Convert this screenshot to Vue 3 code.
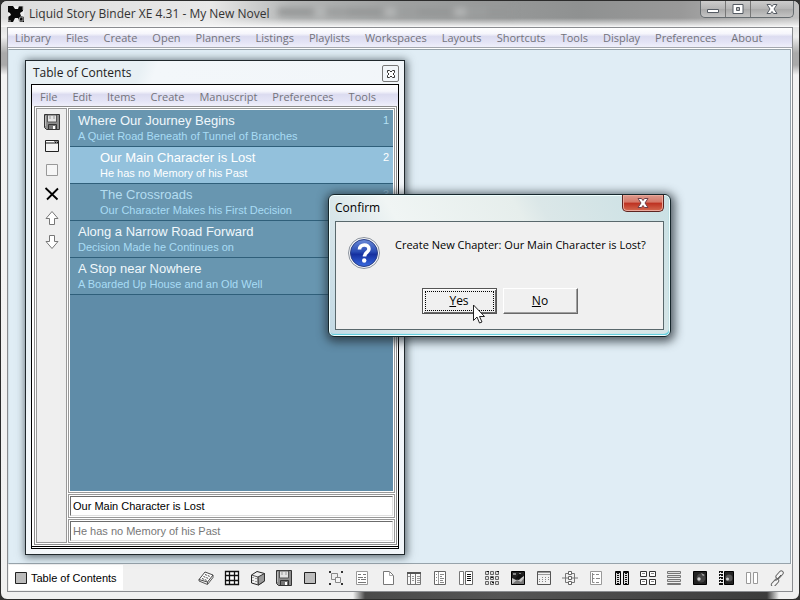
<script setup>
import { ref } from 'vue'

const mainMenu = ['Library', 'Files', 'Create', 'Open', 'Planners', 'Listings', 'Playlists', 'Workspaces', 'Layouts', 'Shortcuts', 'Tools', 'Display', 'Preferences', 'About']
const contentsMenu = ['File', 'Edit', 'Items', 'Create', 'Manuscript', 'Preferences', 'Tools']

const chapters = [
  { id: 1, title: 'Where Our Journey Begins', note: 'A Quiet Road Beneath of Tunnel of Branches', number: 1 },
  { id: 2, title: 'Our Main Character is Lost', note: 'He has no Memory of his Past', number: 2, child: true, selected: true },
  { id: 3, title: 'The Crossroads', note: 'Our Character Makes his First Decision', number: 3, child: true, dim: true },
  { id: 4, title: 'Along a Narrow Road Forward', note: 'Decision Made he Continues on' },
  { id: 5, title: 'A Stop near Nowhere', note: 'A Boarded Up House and an Old Well' }
]

const chapterTitle = ref('Our Main Character is Lost')
const chapterNote = ref('He has no Memory of his Past')

const floppy = '<path d="M.5.5h15v15H2.500L.5 13.500z" fill="#8c8c8c" stroke="#333"/><path d="M3.500 1h9v7h-9z" fill="#e4e4e4" stroke="#555"/><path d="M6 1v4M10 1v4" stroke="#999"/><path d="M4.500 10.500h8v5h-8z" fill="#777" stroke="#333"/><path d="M9 12h2v3H9z" fill="#fff"/><path d="M1.500 2v10" stroke="#bbb"/>'

const sideTools = [
  { label: 'Save', art: floppy },
  { label: 'Open window', art: '<path d="M1.500 2.500h13v11h-13z" fill="#f4f4f4" stroke="#222"/><path d="M2 3h12v3H2z" fill="#888"/><path d="M2 3.500h8" stroke="#fff"/><path d="M11 4.500h1M13 4.500h1" stroke="#111"/>' },
  { label: 'Mark', art: '<path d="M2.500 2.500h11v11h-11z" fill="#f6f6f6" stroke="#999"/>' },
  { label: 'Delete', art: '<path d="M1.500 2L13.500 13.500M14 2.500L9.500 7L3 13.500" stroke="#000" stroke-width="1.800" fill="none"/>' },
  { label: 'Move up', art: '<path d="M8 1.500L14 8.500H10.500V14.500H5.500V8.500H2z" fill="#fff" stroke="#777"/>' },
  { label: 'Move down', art: '<path d="M8 14.500L14 7.500H10.500V1.500H5.500V7.500H2z" fill="#fff" stroke="#777"/>' }
]

const tools = [
  { label: 'Note', art: '<path d="M1 9.500L7 2L15 5L9.500 12z" fill="#fff" stroke="#333" stroke-width=".9"/><path d="M1 9.500v1.500l8.500 3.500 5.500-7V5M9.500 12v2" fill="none" stroke="#444" stroke-width=".9"/><path d="M7 4.500l5 2M5.500 6.500l5 2M4 8.500l5 2" stroke="#444" stroke-dasharray="2 1"/>' },
  { label: 'Grid', art: '<path d="M1.500 1.500h13v13h-13zM5.500 1.500v13M10.500 1.500v13M1.500 5.500h13M1.500 10.500h13" fill="#fff" stroke="#111" stroke-width="1.300"/>' },
  { label: 'Box', art: '<path d="M1.500 5L7 1.500L14.500 3.500V11L8.500 15L1.500 13z" fill="#eee" stroke="#222"/><path d="M8 7l6.500-3.500V11L8.500 15z" fill="#999" stroke="#333"/><path d="M1.500 5L8 7V15" fill="none" stroke="#555"/><path d="M3 7v1M3 10v1M6 8v1M6 11v1" stroke="#555"/>' },
  { label: 'Save', art: floppy },
  { label: 'Panel', art: '<path d="M2.500 2.500h11v11h-11z" fill="#bdbdbd" stroke="#222"/>' },
  { label: 'Group', art: '<path d="M3.500 3.500h6v6h-6z" fill="#eee" stroke="#888"/><path d="M7.500 7.500h5v5h-5z" fill="#f6f6f6" stroke="#888"/><path d="M1 1h2v2H1zM13 1h2v2h-2zM1 13h2v2H1zM13 13h2v2h-2z" fill="#333"/>' },
  { label: 'Article', art: '<path d="M2.500 1.500h11v13h-11z" fill="#fff" stroke="#999"/><path d="M4 4.500h3M9 4.500h3M4 7.500h5M10 7.500h2M4 9.500h2M7 9.500h5M4 12.500h8" stroke="#777"/>' },
  { label: 'Page', art: '<path d="M3.500 1.500h6l4 4v9h-10z" fill="#fff" stroke="#777"/><path d="M9.500 1.500v4h4" fill="none" stroke="#aaa"/>' },
  { label: 'Outline', art: '<path d="M1.500 2.500h13v12h-13z" fill="#fafafa" stroke="#777"/><path d="M1 3h14" stroke="#555" stroke-width="2"/><path d="M4.500 4v10M9.500 4v10" stroke="#777"/><path d="M2 6.500h2M6 6.500h2M11 6.500h3M6 8.500h2M11 8.500h3M6 10.500h2M11 10.500h3M11 12.500h3" stroke="#999"/>' },
  { label: 'Catalog', art: '<path d="M2.500 1.500h11v13h-11z" fill="#fff" stroke="#666"/><path d="M6.500 2v12" stroke="#999"/><path d="M4 4.500h1M4 7.500h1M4 10.500h1M8 4.500h4M8 6.500h2M8 8.500h4M8 10.500h3M8 12.500h4" stroke="#888"/>' },
  { label: 'Compare', art: '<path d="M1.500 1.500h4v13h-4z" fill="#fff" stroke="#777"/><path d="M7.500 1.500h7v13h-7z" fill="#fff" stroke="#666"/><path d="M9 4.500h4M9 6.500h4M9 8.500h4M9 10.500h4" stroke="#111"/>' },
  { label: 'Storyboard', art: '<path d="M1.500 1.500h3v3h-3zM6.500 1.500h3v3h-3zM11.500 1.500h3v3h-3zM1.500 6.500h3v3h-3zM6.500 6.500h3v3h-3zM11.500 6.500h3v3h-3zM1.500 11.500h3v3h-3zM6.500 11.500h3v3h-3zM11.500 11.500h3v3h-3z" fill="#ddd" stroke="#666"/><path d="M3 1.500h2M7 7.500h2M13 1.500h2M8 12.500h2" stroke="#111"/>' },
  { label: 'Picture', art: '<path d="M1.500 1.500h13v13h-13z" fill="#222" stroke="#000"/><path d="M2 8l4 2 3-1 5-3v8H2z" fill="#c4c4c4"/><path d="M2 14l5-4 4 2 3-4v6z" fill="#777"/><path d="M5 9l4-5 4 2-4 4z" fill="#111"/><path d="M3 3h3v2H3zM9 3h2v1H9z" fill="#888"/>' },
  { label: 'Calendar', art: '<path d="M1.500 1.500h13v13h-13z" fill="#f2f2f2" stroke="#555"/><path d="M2 4.500h12M2 2.500h12" stroke="#999"/><path d="M6 7.500h1M9 7.500h1M12 7.500h1M3 9.500h1M6 9.500h1M9 9.500h1M12 9.500h1M3 11.500h1M6 11.500h1M9 11.500h1" stroke="#888"/>' },
  { label: 'Diagram', art: '<path d="M3.500 3.500h9v9h-9zM0 8h16" fill="none" stroke="#777"/><path d="M6.500 1.500h3v3h-3zM6.500 6.500h3v3h-3zM6.500 11.500h3v3h-3z" fill="#fff" stroke="#666"/>' },
  { label: 'Tree', art: '<path d="M2.500 1.500h11v13h-11z" fill="#fff" stroke="#999"/><path d="M4.500 3v9.500h2M4.500 4.500h2M4.500 8.500h2M8 4.500h3M8 8.500h4M8 12.500h3" stroke="#888" fill="none"/>' },
  { label: 'Columns', art: '<path d="M1.500 1.500h5v13h-5zM9.500 1.500h5v13h-5z" fill="#ddd" stroke="#000"/><path d="M4 3v11M12 3v11" stroke="#111" stroke-width="2" stroke-dasharray="1 1"/><path d="M1 2.500h6M9 2.500h6" stroke="#111"/>' },
  { label: 'Cards', art: '<path d="M.5 1.500h6v5h-6zM9.500 1.500h6v5h-6zM.5 9.500h6v5h-6zM9.500 9.500h6v5h-6z" fill="#fff" stroke="#333"/><path d="M2 3.500h3M11 3.500h3M2 11.500h3M11 11.500h3" stroke="#888"/>' },
  { label: 'Rows', art: '<path d="M1.500 1.500h13v2h-13zM1.500 5.500h13v2h-13zM1.500 9.500h13v2h-13zM1.500 13.500h13v1h-13z" fill="#ddd" stroke="#777"/>' },
  { label: 'Gallery', art: '<path d="M1.500 1.500h13v13h-13z" fill="#222" stroke="#000"/><circle cx="9" cy="8" r="4.500" fill="#444"/><circle cx="7" cy="9" r="1.700" fill="#ccc"/><path d="M9 3l4 2-2 1z" fill="#aaa"/>' },
  { label: 'Slides', art: '<path d="M6.500 1.500h9v13h-9z" fill="#222" stroke="#000"/><path d="M3 1v14" stroke="#111" stroke-width="4" stroke-dasharray="2 1"/><path d="M2.500 2v12" stroke="#ddd" stroke-dasharray="1 2"/><circle cx="11" cy="8" r="3.500" fill="#555"/><circle cx="9.500" cy="9" r="1.500" fill="#ccc"/>' },
  { label: 'Split', art: '<path d="M2.500 2.500h4v11h-4zM9.500 2.500h4v11h-4z" fill="#fff" stroke="#999"/>' },
  { label: 'Link', art: '<g fill="#f4f4f4" stroke="#666"><rect x="-1" y="6" width="9" height="4" rx="2" transform="rotate(-48 8 8) translate(-1 1)"/><rect x="8" y="6" width="9" height="4" rx="2" transform="rotate(-48 8 8) translate(-1 -1)"/></g><path d="M5.500 11l5.500-6" stroke="#555"/>' }
]
</script>

<template>
  <div class="shell">
    <header class="titlebar">
      <svg class="logo" viewBox="0 0 16 16" aria-hidden="true">
        <path d="M0 0h16v16H0z" fill="#eee" />
        <path d="M0 0h5l2 3h3l1-3h4v5l-3 2 1 3 3 1v5h-4l-2-4H7l-2 4H0v-5l3-2-1-2-2-1z" fill="#080808" />
        <path d="M11 0h4v4M12 11h3v4h-4zM0 10v5h3" fill="none" stroke="#aaa" />
      </svg>
      <h1>Liquid Story Binder XE 4.31 - My New Novel</h1>
      <div class="blurred" aria-hidden="true"></div>
      <div class="window-buttons">
        <button aria-label="Minimize"><svg viewBox="0 0 16 12"><path d="M2.500 6.500h11v3h-11z" fill="#fff" stroke="#555b63" /></svg></button>
        <button aria-label="Maximize"><svg viewBox="0 0 16 12"><path d="M3 1.500h10v9H3z" fill="#fff" stroke="#555b63" /><path d="M6.500 4.500h3v3h-3z" fill="#bbb" stroke="#555b63" /></svg></button>
        <button class="wide" aria-label="Close"><svg viewBox="0 0 16 12"><path d="M3 1.500h3.500L8 3.500l1.500-2H13L10 6l3 4.500H9.500L8 8.500l-1.500 2H3L6 6z" fill="#fff" stroke="#555b63" /></svg></button>
      </div>
    </header>

    <div class="client">
      <nav class="menu main-menu" aria-label="Main">
        <button v-for="item in mainMenu" :key="item">{{ item }}</button>
      </nav>

      <main class="desktop">
        <section class="contents-window">
          <div class="contents-title">
            <h2>Table of Contents</h2>
            <button class="small-close" aria-label="Close contents">
              <svg viewBox="0 0 8 8"><path d="M.5.5h2L4 2 5.500.5h2v2L6 4l1.500 1.500v2h-2L4 6 2.500 7.500h-2v-2L2 4 .5 2.500z" fill="#fff" stroke="#333" /></svg>
            </button>
          </div>
          <div class="contents-body">
            <nav class="menu contents-menu" aria-label="Contents">
              <button v-for="item in contentsMenu" :key="item">{{ item }}</button>
            </nav>
            <div class="panes">
              <div class="side-tools">
                <button v-for="tool in sideTools" :key="tool.label" :aria-label="tool.label">
                  <svg viewBox="0 0 16 16" v-html="tool.art"></svg>
                </button>
              </div>
              <div class="pane-column">
                <div class="cell list-cell">
                  <ul class="chapters">
                    <li v-for="chapter in chapters" :key="chapter.id" :class="{ child: chapter.child, selected: chapter.selected, dim: chapter.dim }">
                      <div class="chapter-text">
                        <div class="chapter-title">{{ chapter.title }}</div>
                        <div class="chapter-note">{{ chapter.note }}</div>
                      </div>
                      <span v-if="chapter.number" class="chapter-number">{{ chapter.number }}</span>
                    </li>
                  </ul>
                </div>
                <div class="cell"><input v-model="chapterTitle" type="text" aria-label="Chapter title" /></div>
                <div class="cell"><input v-model="chapterNote" class="note-input" type="text" aria-label="Chapter note" /></div>
              </div>
            </div>
          </div>
        </section>

        <section class="dialog" role="dialog" aria-labelledby="confirm-title">
          <div class="dialog-title">
            <h2 id="confirm-title">Confirm</h2>
            <button class="dialog-close" aria-label="Close dialog">
              <svg viewBox="0 0 16 12"><path d="M3 1.500h3.500L8 3.500l1.500-2H13L10 6l3 4.500H9.500L8 8.500l-1.500 2H3L6 6z" fill="#fff" stroke="#704048" /></svg>
            </button>
          </div>
          <div class="dialog-body">
            <div class="question">
              <svg viewBox="0 0 32 32" aria-hidden="true">
                <defs>
                  <linearGradient id="ball" x1="0" y1="0" x2="0" y2="1">
                    <stop offset="0" stop-color="#6a8ad8" />
                    <stop offset=".45" stop-color="#2a4cb4" />
                    <stop offset=".55" stop-color="#1530a0" />
                    <stop offset="1" stop-color="#3a6be0" />
                  </linearGradient>
                </defs>
                <circle cx="16" cy="16" r="15.500" fill="#f4f6fa" stroke="#8b929c" />
                <circle cx="16" cy="16" r="13.500" fill="url(#ball)" stroke="#2a3f86" />
                <path d="M11.500 12.500C11.500 6.500 21 6.500 21 12c0 3.500-4.500 3.500-4.500 7.500" fill="none" stroke="#fff" stroke-width="3.600" />
                <circle cx="16.200" cy="23.500" r="2.200" fill="#fff" />
              </svg>
              <p>Create New Chapter: Our Main Character is Lost?</p>
            </div>
            <div class="answers">
              <button class="default"><span><u>Y</u>es</span></button>
              <button><span><u>N</u>o</span></button>
            </div>
          </div>
          <svg class="pointer" viewBox="0 0 12 20" aria-hidden="true">
            <path d="M.5 1v15.500l3.500-3.500 2.500 6 2.500-1-2.500-5.500h5z" fill="#fff" stroke="#222" />
          </svg>
        </section>
      </main>

      <footer class="taskbar">
        <button class="task"><svg viewBox="0 0 12 12" aria-hidden="true"><path d="M.5.5h11v11H.5z" fill="#bbb" stroke="#222" /></svg>Table of Contents</button>
        <div class="tools">
          <button v-for="tool in tools" :key="tool.label" :aria-label="tool.label">
            <svg viewBox="0 0 16 16" v-html="tool.art"></svg>
          </button>
        </div>
      </footer>
    </div>
  </div>
</template>

<style>
body {
  background: #333;
}
</style>

<style scoped>
* {
  box-sizing: border-box;
}

button {
  padding: 0;
  border: 0;
  background: none;
  color: inherit;
  font: inherit;
}

svg {
  display: block;
}

h1,
h2,
p,
ul {
  margin: 0;
  padding: 0;
  font-size: inherit;
  font-weight: 400;
}

.shell {
  display: flex;
  flex-direction: column;
  min-height: 100vh;
  padding: 0 6px 7px 6px;
  border: 1px solid #2c2c2c;
  border-radius: 7px;
  background:
    linear-gradient(90deg, transparent 352px, #4a4a4a 364px, #555 500px, #3c3c3c calc(100% - 32px), transparent calc(100% - 20px)) bottom / 100% 7px no-repeat,
    linear-gradient(180deg, #c9c9c9 0, #eee 36px, #aaa 52px, #aaa 64px, #f3f3f3 74px, #f0f0f0 100%);
  font: 11px/16px "Open Sans", "Noto Sans", sans-serif;
  color: #222;
}

.titlebar {
  display: flex;
  align-items: center;
  position: relative;
  height: 26px;
  margin: 0 -6px;
  padding-left: 7px;
  border-radius: 6px 6px 0 0;
  background:
    linear-gradient(180deg, transparent 17px, #f4f4f4cc 24px, #fafafa 100%),
    linear-gradient(90deg, #ddd 0, #e8e8e8 210px, #b5b7b7 290px, #a0a2a2 400px, #8f9191 580px, #999 680px, #c2c2c2 100%);
}

.logo {
  width: 16px;
  height: 16px;
}

.titlebar h1 {
  margin-left: 5px;
  color: #333;
  font-size: 12px;
  line-height: 16px;
}

.blurred {
  flex: 0 1 236px;
  height: 8px;
  margin: -4px auto 0 8px;
  background: repeating-linear-gradient(90deg, #959797 0 34px, #b4b6b6 38px 46px, #9b9d9d 50px 70px);
  filter: blur(3px);
}

.window-buttons {
  display: flex;
  align-self: flex-start;
  margin-right: 5px;
  border: 1px solid #666c70;
  border-top: 0;
  border-radius: 0 0 5px 5px;
  background: linear-gradient(#ccc, #b4b4b4 50%, #a8a8a8 50%, #c4c4c4);
}

.window-buttons button {
  display: grid;
  place-items: center;
  width: 25px;
  height: 16px;
  border-right: 1px solid #777;
}

.window-buttons .wide {
  width: 42px;
  border-right: 0;
}

.window-buttons svg,
.dialog-close svg {
  width: 16px;
  height: 12px;
}

.client {
  display: flex;
  flex: 1;
  flex-direction: column;
  border: 1px solid #8a8c90;
  background: #fff;
}

.menu {
  display: flex;
  align-items: center;
  gap: 15px;
  color: #73737c;
  background: linear-gradient(#fff 0, #f6f6fc 30%, #dcdcf0 45%, #e4e4f6 75%, #f0f0fa 100%);
}

.main-menu {
  height: 20px;
  padding: 0 7px;
  border-bottom: 1px solid #a5a8b0;
}

.desktop {
  flex: 1;
  position: relative;
  margin: 1px 1px 0 0;
  border: 1px solid #97a3ab;
  border-left-color: #cfdde4;
  background: #e0edf5;
}

.contents-window {
  display: flex;
  flex-direction: column;
  position: absolute;
  left: 16px;
  top: 10px;
  width: 380px;
  height: 495px;
  padding: 0 5px 5px;
  border: 1px solid #20282c;
  background: linear-gradient(110deg, #e8f0f4 0, #e8f0f4 110px, #f3f7fa 125px, #f1f5f9 100%);
  box-shadow: 1px 1px 8px 1px #3a464ecc;
}

.contents-title {
  display: flex;
  align-items: center;
  justify-content: space-between;
  height: 23px;
  padding-left: 2px;
  font-size: 12px;
}

.small-close {
  display: grid;
  place-items: center;
  width: 17px;
  height: 17px;
  margin-top: 2px;
  border: 1px solid #777;
  border-radius: 2px;
}

.small-close svg {
  width: 8px;
  height: 8px;
}

.contents-body {
  display: flex;
  flex: 1;
  flex-direction: column;
  padding-bottom: 2px;
  border: 1px solid #000;
  background: linear-gradient(#000, #000) left bottom 1px / 100% 1px no-repeat #fff;
}

.contents-menu {
  height: 21px;
  padding: 2px 8px 0;
}

.panes {
  display: flex;
  flex: 1;
  gap: 1px;
  margin: 0 1px 1px 2px;
  padding: 1px;
  border: 1px solid #8d8d8d;
}

.side-tools {
  display: flex;
  flex-direction: column;
  align-items: center;
  gap: 8px;
  width: 31px;
  padding-top: 5px;
  border: 1px solid #999;
  background: #efefef;
}

.side-tools svg,
.tools svg {
  width: 16px;
  height: 16px;
}

.pane-column {
  display: flex;
  flex: 1;
  flex-direction: column;
  gap: 1px;
}

.cell {
  padding: 1px;
  border: 1px solid #999;
}

.list-cell {
  flex: 1;
  background: #fff;
}

.chapters {
  height: 100%;
  list-style: none;
  background: #5f8ca8;
  font-family: "Liberation Sans", Arial, sans-serif;
}

.chapters li {
  display: flex;
  justify-content: space-between;
  height: 37px;
  padding: 3px 4px 0 8px;
  border-bottom: 1px solid #2f5f7a;
  background: #6896b0;
  color: #f0f8fc;
}

.chapters .child {
  padding-left: 30px;
}

.chapters .selected {
  background: #93c1dc;
  color: #fff;
}

.chapters .dim {
  color: #b4ddf1;
}

.chapter-title {
  font-size: 13px;
  line-height: 16px;
}

.chapter-note {
  color: #a9dcf5;
  font-size: 11px;
  line-height: 14px;
}

.selected .chapter-note {
  color: #fff;
}

.chapter-number {
  color: #b4e0f4;
  font-size: 11px;
  line-height: 14px;
}

.selected .chapter-number {
  color: #fff;
}

.dim .chapter-number {
  color: #8fb9d0;
}

input {
  display: block;
  width: 100%;
  height: 20px;
  padding: 0 2px;
  border: 1px solid;
  border-color: #6c6c6c #e0e0e0 #e0e0e0 #6c6c6c;
  background: #fff;
  color: #000;
  font: 11px/16px "Liberation Sans", Arial, sans-serif;
}

.note-input {
  color: #777;
}

.dialog {
  position: absolute;
  left: 319px;
  top: 144px;
  width: 343px;
  padding: 0 6px 6px;
  border: 1px solid #16262b;
  border-radius: 6px;
  background: linear-gradient(60deg, #c2d9e4 0, #d9e6ea 18%, #f0f5f4 32%, #e6eeec 62%, #dbe7e8 68%, #c9e0e4 100%);
  box-shadow: inset 0 0 0 1px #f0ffff, inset -1px -2px 1px #59cddd, 1px 2px 10px 3px #222c32bb;
}

.dialog-title {
  display: flex;
  align-items: center;
  justify-content: space-between;
  height: 26px;
  color: #000;
  font-size: 12px;
}

.dialog-close {
  display: grid;
  place-items: center;
  align-self: flex-start;
  width: 42px;
  height: 17px;
  border: 1px solid #5d2420;
  border-top: 0;
  border-radius: 0 0 5px 5px;
  background: linear-gradient(#dd9a8e, #d57767 45%, #bd3020 50%, #d46a50);
  box-shadow: inset 0 0 0 1px #eba99c;
}

.dialog-body {
  border: 1px solid #59686c;
  background: #f0f0f0;
  color: #000;
}

.question {
  display: flex;
  gap: 15px;
  padding: 15px 12px 0;
}

.question svg {
  width: 32px;
  height: 32px;
}

.question p {
  flex: 1;
  font-size: 11px;
  line-height: 16px;
  white-space: nowrap;
}

.answers {
  display: flex;
  justify-content: center;
  gap: 6px;
  padding: 19px 0 15px;
}

.answers button {
  width: 75px;
  height: 26px;
  padding: 2px;
  border: 1px solid;
  border-color: #fff #696969 #696969 #fff;
  background: #f0f0f0;
  box-shadow: inset -1px -1px #a0a0a0;
  font-size: 12px;
  line-height: 18px;
}

.answers .default {
  border-color: #555;
  box-shadow: inset 1px 1px #fff, inset -1px -1px #696969;
}

.answers span {
  display: block;
  border: 1px solid transparent;
}

.answers .default span {
  border: 1px dotted #000;
}

.pointer {
  position: absolute;
  left: 144px;
  top: 109px;
  width: 12px;
  height: 20px;
}

.taskbar {
  display: flex;
  align-items: center;
  justify-content: space-between;
  height: 27px;
  padding: 1px 6px 1px 1px;
  background: #f0f0f0;
}

.task {
  display: flex;
  align-items: center;
  gap: 4px;
  align-self: stretch;
  padding: 0 6px;
  background: #fff;
  color: #000;
  font: 11px/16px "Liberation Sans", Arial, sans-serif;
}

.task svg {
  width: 12px;
  height: 12px;
}

.tools {
  display: flex;
  gap: 10px;
}
</style>
